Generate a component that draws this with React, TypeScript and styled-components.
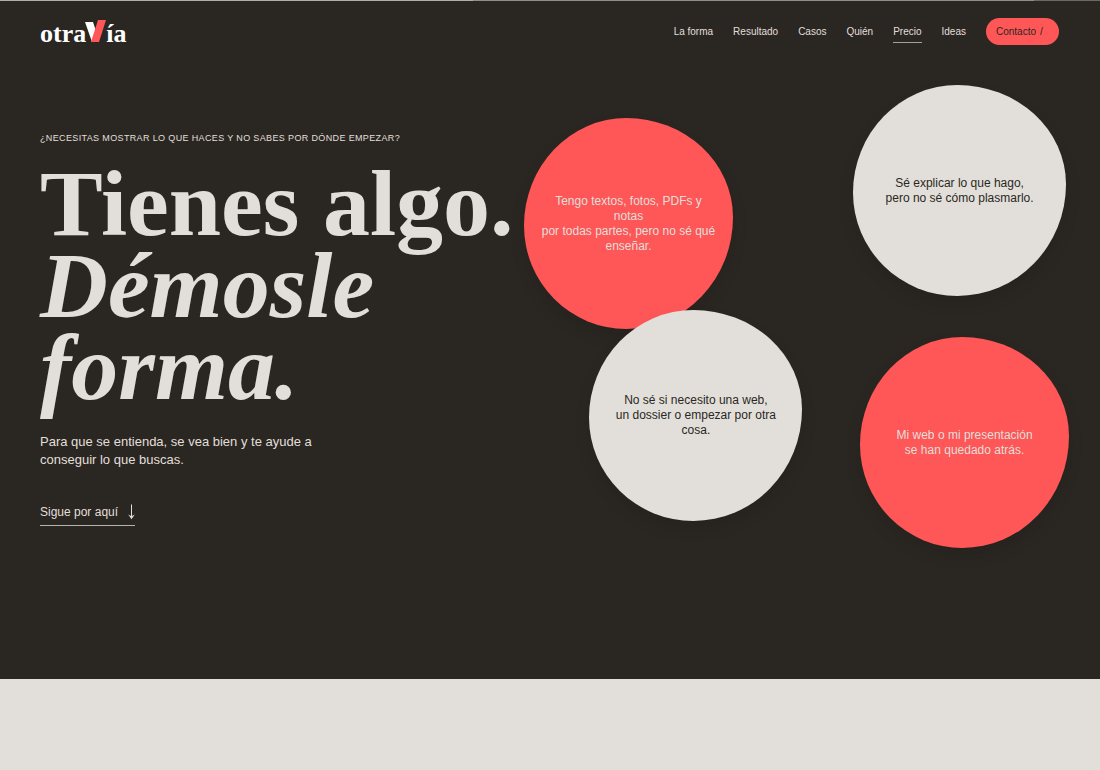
import React from "react";
import styled, { createGlobalStyle } from "styled-components";

const ink = "#2a2722";
const bone = "#e2dfda";
const coral = "#ff5757";

const GlobalStyle = createGlobalStyle`
  *, *::before, *::after { box-sizing: border-box; }
  body {
    margin: 0;
    background: ${bone};
    color: ${bone};
    font-family: "Liberation Sans", Arial, Helvetica, sans-serif;
  }
  h1, p, ul { margin: 0; padding: 0; }
  ul { list-style: none; }
  a { color: inherit; text-decoration: none; }
`;

const Screen = styled.div`
  min-height: 100vh;
  overflow-x: hidden;
`;

const Cover = styled.div`
  background: ${ink};
  padding-bottom: 130px;
`;

const TopLine = styled.div`
  height: 1px;
  background: linear-gradient(90deg, #b0afa9 43%, #908e88 43%, #908e88 94%, #6b6964 94%);
`;

const Header = styled.header`
  display: flex;
  align-items: center;
  justify-content: space-between;
  height: 60px;
  padding: 0 41px 0 40px;
`;

const Logo = styled.a`
  display: flex;
  align-items: baseline;
  padding-top: 6px;
  color: #fff;
  font-family: "Liberation Serif", "Times New Roman", serif;
  font-size: 26px;
  font-weight: 700;
  line-height: 28px;
`;

const LogoMark = styled.svg`
  width: 22px;
  height: 22px;
  margin: 0 -1px;
`;

const Nav = styled.nav`
  display: flex;
  align-items: center;
  gap: 20px;
`;

const NavList = styled.ul`
  display: flex;
  gap: 20px;
`;

const NavLink = styled.a<{ $active?: boolean }>`
  display: block;
  padding: 6px 0 4px;
  border-bottom: 1px solid ${(p) => (p.$active ? "#a3a19c" : "transparent")};
  font-size: 10px;
  line-height: 12px;
`;

const ContactLink = styled.a`
  display: flex;
  align-items: center;
  gap: 4px;
  min-width: 73px;
  height: 27px;
  padding: 1px 10px 0;
  border-radius: 14px;
  background: ${coral};
  color: ${ink};
  font-size: 10px;
  line-height: 12px;
`;

const Hero = styled.main`
  display: grid;
  grid-template-columns: minmax(0, 484fr) minmax(0, 536fr);
  padding: 24px 40px 0;
`;

const Intro = styled.section`
  display: flex;
  flex-direction: column;
  align-items: flex-start;
  padding-top: 47px;
`;

const Eyebrow = styled.p`
  font-size: 9px;
  line-height: 12px;
  letter-spacing: 0.04em;
  text-transform: uppercase;
  white-space: nowrap;
`;

const Title = styled.h1`
  margin-top: 18px;
  font-family: "Liberation Serif", "Times New Roman", serif;
  font-size: 94px;
  font-weight: 700;
  line-height: 82px;
  white-space: nowrap;

  em { display: block; }
`;

const Lead = styled.p`
  max-width: 290px;
  margin-top: 25px;
  font-size: 13px;
  line-height: 18px;
`;

const NextLink = styled.a`
  display: flex;
  align-items: center;
  gap: 10px;
  margin-top: 34px;
  padding-bottom: 4px;
  border-bottom: 1px solid #b5b3ae;
  font-size: 12px;
  line-height: 18px;
`;

const Arrow = styled.svg`
  width: 7px;
  height: 16px;
`;

const Cloud = styled.ul`
  position: relative;
  height: 464px;
`;

const Bubble = styled.li<{ $tone: "coral" | "bone"; $left: string; $top: string }>`
  position: absolute;
  left: ${(p) => p.$left};
  top: ${(p) => p.$top};
  display: flex;
  align-items: center;
  justify-content: center;
  width: ${(p) => (p.$tone === "coral" ? 209 : 213)}px;
  height: 211px;
  padding: 0 16px;
  border-radius: 49% 51% 51% 49% / 51% 47% 53% 49%;
  background: ${(p) => (p.$tone === "coral" ? coral : bone)};
  color: ${(p) => (p.$tone === "coral" ? bone : ink)};
  box-shadow: 0 8px 16px rgba(0, 0, 0, 0.1);
  font-size: 12px;
  line-height: 15px;
  text-align: center;
`;

const links = ["La forma", "Resultado", "Casos", "Quién", "Precio", "Ideas"];

export default function App() {
  return (
    <Screen>
      <GlobalStyle />
      <Cover>
        <TopLine />
        <Header>
          <Logo href="#inicio" aria-label="otraVía">
            <span>otra</span>
            <LogoMark viewBox="0 0 22 22" aria-hidden="true">
              <polygon points="0,2 8,2 11,11 8,22 7,22" fill="#fff" />
              <polygon points="13,0 21,0 14,22 6,22" fill={coral} />
            </LogoMark>
            <span>ía</span>
          </Logo>
          <Nav aria-label="Principal">
            <NavList>
              {links.map((label) => (
                <li key={label}>
                  <NavLink href="#" $active={label === "Precio"}>
                    {label}
                  </NavLink>
                </li>
              ))}
            </NavList>
            <ContactLink href="#contacto">
              <span>Contacto</span>
              <span>/</span>
            </ContactLink>
          </Nav>
        </Header>
        <Hero>
          <Intro>
            <Eyebrow>¿Necesitas mostrar lo que haces y no sabes por dónde empezar?</Eyebrow>
            <Title>
              Tienes algo.
              <em>Démosle</em>
              <em>forma.</em>
            </Title>
            <Lead>Para que se entienda, se vea bien y te ayude a conseguir lo que buscas.</Lead>
            <NextLink href="#forma">
              Sigue por aquí
              <Arrow viewBox="0 0 7 16" aria-hidden="true">
                <path d="M3.5 0.5V14" fill="none" stroke={bone} strokeWidth="1" />
                <path d="M0.2 10.6L3.5 12.2L6.8 10.6L3.5 15.2Z" fill={bone} />
              </Arrow>
            </NextLink>
          </Intro>
          <Cloud>
            <Bubble $tone="coral" $left="0" $top="33px">
              <p>
                Tengo textos, fotos, PDFs y notas
                <br />
                por todas partes, pero no sé qué enseñar.
              </p>
            </Bubble>
            <Bubble $tone="bone" $left="61.4%" $top="0">
              <p>
                Sé explicar lo que hago,
                <br />
                pero no sé cómo plasmarlo.
              </p>
            </Bubble>
            <Bubble $tone="bone" $left="12.2%" $top="225px">
              <p>
                No sé si necesito una web,
                <br />
                un dossier o empezar por otra cosa.
              </p>
            </Bubble>
            <Bubble $tone="coral" $left="62.7%" $top="252px">
              <p>
                Mi web o mi presentación
                <br />
                se han quedado atrás.
              </p>
            </Bubble>
          </Cloud>
        </Hero>
      </Cover>
    </Screen>
  );
}
